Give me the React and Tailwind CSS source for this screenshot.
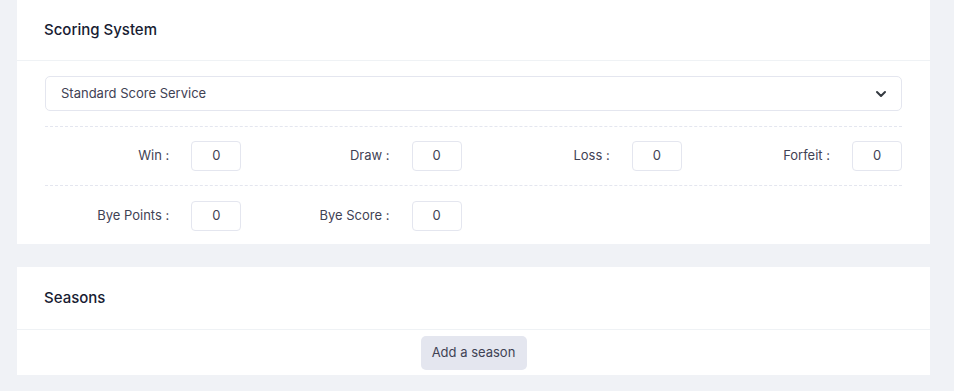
import { ChevronDown } from "lucide-react";

const Field = ({ label }) => (
	<div className="flex w-1/4 items-center justify-end px-3">
		<span className="text-[13px] text-[#3f4254]">{label} :</span>
		<div className="ml-[22px] flex h-[30px] w-[50px] items-center justify-center rounded-[4px] border border-[#e4e6ef] text-[13px] text-[#3f4254]">
			0
		</div>
	</div>
);

const Card = ({ title, headerClass = "h-[61px]", children }) => (
	<div className="bg-white">
		<div className={`flex items-center border-b border-[#eff2f5] px-[27px] ${headerClass}`}>
			<h3 className="text-[15px] font-medium text-[#181c32]">{title}</h3>
		</div>
		{children}
	</div>
);

export default function App() {
	return (
		<div
			className="h-[391px] w-[954px] overflow-hidden bg-[#f0f2f6] pl-[17px] pr-6"
			style={{ fontFamily: "Inter, 'Noto Sans', sans-serif" }}
		>
			<Card title="Scoring System">
				<div className="px-7 pt-[15px] pb-[13px]">
					<div className="flex h-[35px] items-center justify-between rounded-[5px] border border-[#e4e6ef] pl-[15px] pr-[12px] text-[13px] text-[#3f4254]">
						<span>Standard Score Service</span>
						<ChevronDown className="h-4 w-4 text-[#343a40]" strokeWidth={3} />
					</div>
					<div className="mt-[15px] border-t border-dashed border-[#e4e6ef]" />
					<div className="-mx-3 flex pt-[14px] pb-[14px]">
						<Field label="Win" />
						<Field label="Draw" />
						<Field label="Loss" />
						<Field label="Forfeit" />
					</div>
					<div className="border-t border-dashed border-[#e4e6ef]" />
					<div className="-mx-3 flex pt-[15px]">
						<Field label="Bye Points" />
						<Field label="Bye Score" />
					</div>
				</div>
			</Card>
			<div className="h-[23px]" />
			<Card title="Seasons" headerClass="h-[63px]">
				<div className="flex justify-center pt-[6px] pb-[5px]">
					<button
						type="button"
						className="h-[34px] w-[106px] rounded-[5px] bg-[#e4e6ef] text-[13px] text-[#3f4254]"
					>
						Add a season
					</button>
				</div>
			</Card>
		</div>
	);
}
